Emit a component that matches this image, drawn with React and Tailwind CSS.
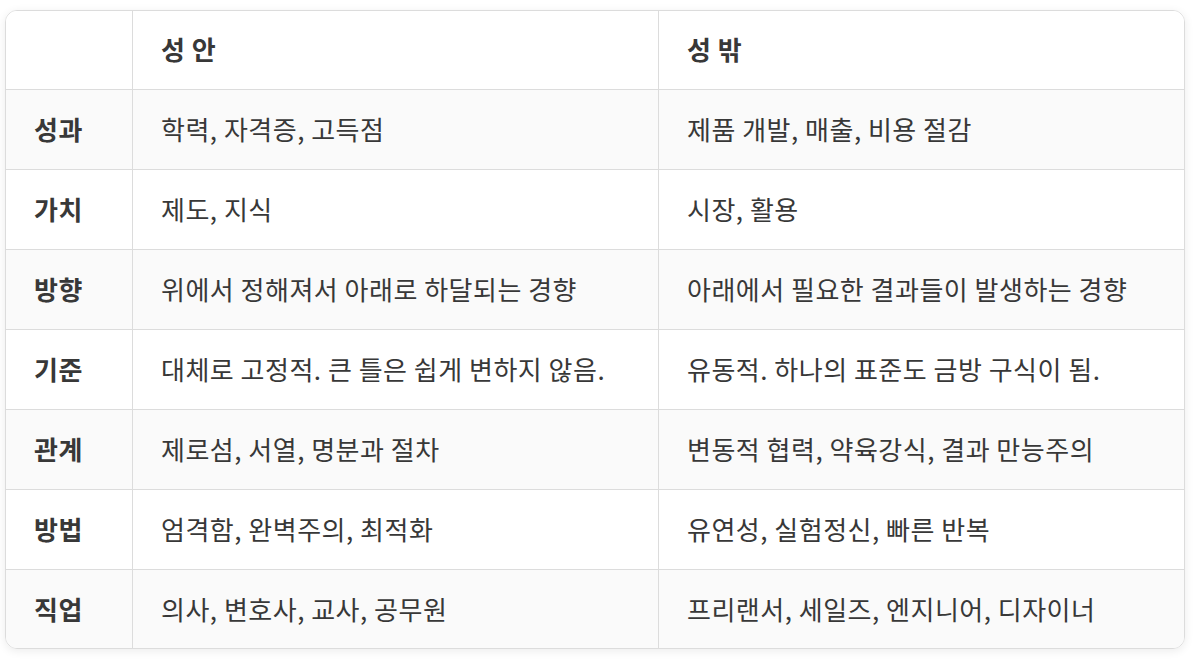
const rows = [
  ["성과", "학력, 자격증, 고득점", "제품 개발, 매출, 비용 절감"],
  ["가치", "제도, 지식", "시장, 활용"],
  ["방향", "위에서 정해져서 아래로 하달되는 경향", "아래에서 필요한 결과들이 발생하는 경향"],
  ["기준", "대체로 고정적. 큰 틀은 쉽게 변하지 않음.", "유동적. 하나의 표준도 금방 구식이 됨."],
  ["관계", "제로섬, 서열, 명분과 절차", "변동적 협력, 약육강식, 결과 만능주의"],
  ["방법", "엄격함, 완벽주의, 최적화", "유연성, 실험정신, 빠른 반복"],
  ["직업", "의사, 변호사, 교사, 공무원", "프리랜서, 세일즈, 엔지니어, 디자이너"],
];

export default function App() {
  return (
    <div className="w-[1200px] h-[666px] bg-white pt-[10px] pl-[5px] font-['Noto_Sans_CJK_KR',sans-serif] text-[26px] tracking-[0.5px] text-[#383838]">
      <div className="w-[1180px] rounded-[12px] border border-[#dcdcdc] overflow-hidden shadow-[0_2px_10px_rgba(0,0,0,0.08)]">
        <div className="grid grid-cols-[126px_526px_526px] h-[78px] bg-white">
          <div />
          <div className="border-l border-[#dcdcdc] flex items-center pl-[28px] pb-[4px] font-bold">성 안</div>
          <div className="border-l border-[#dcdcdc] flex items-center pl-[28px] pb-[4px] font-bold">성 밖</div>
        </div>
        {rows.map((r, i) => (
          <div
            key={r[0]}
            className={`grid grid-cols-[126px_526px_526px] border-t border-[#dcdcdc] ${i === rows.length - 1 ? "h-[79px]" : "h-[80px]"} ${i % 2 === 0 ? "bg-[#fafafa]" : "bg-white"}`}
          >
            <div className="flex items-center pl-[28px] pb-[2px] font-bold">{r[0]}</div>
            <div className="border-l border-[#dcdcdc] flex items-center pl-[28px] pb-[2px]">{r[1]}</div>
            <div className="border-l border-[#dcdcdc] flex items-center pl-[28px] pb-[2px]">{r[2]}</div>
          </div>
        ))}
      </div>
    </div>
  );
}
